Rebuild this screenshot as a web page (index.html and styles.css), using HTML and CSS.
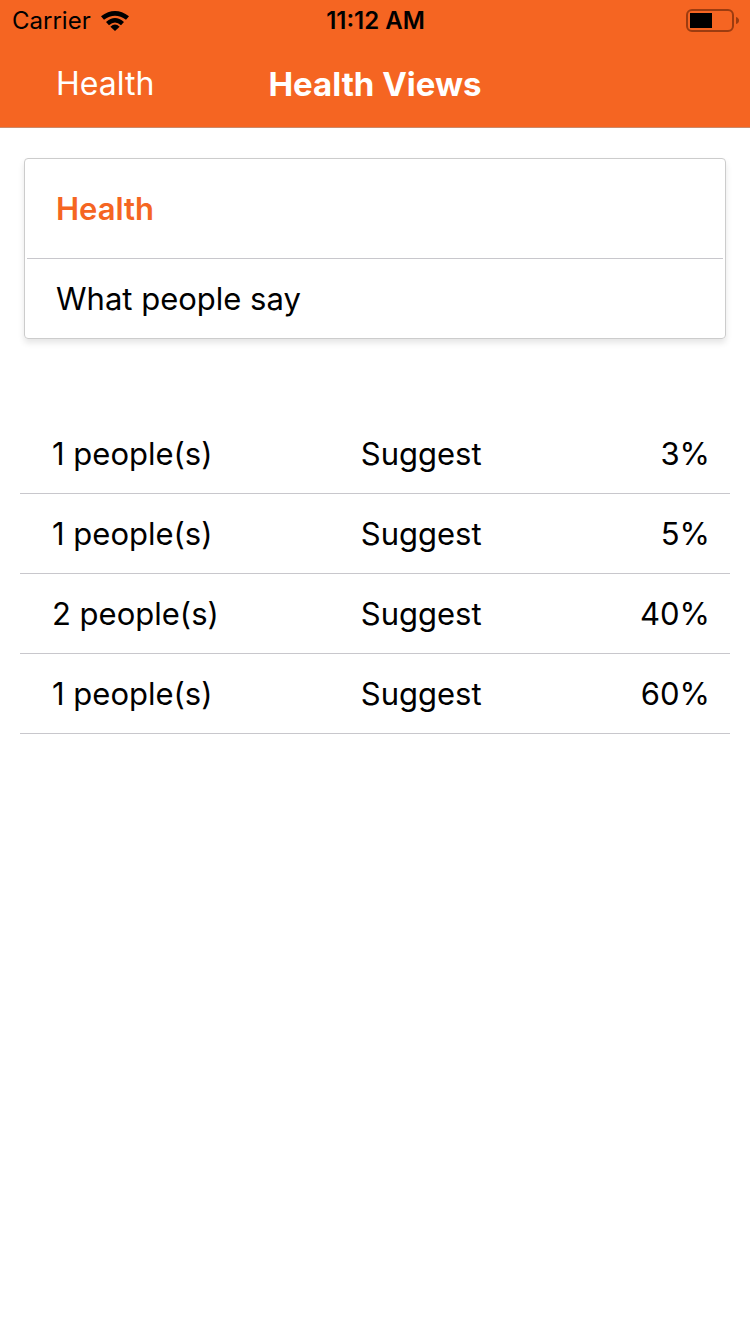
FILE: index.html
```html
<!DOCTYPE html>
<html lang="en">
<head>
  <meta charset="UTF-8" />
  <title>Health Views</title>
  <meta name="viewport" content="width=device-width, initial-scale=1.0" />
  <link rel="stylesheet" href="styles.css">
</head>
<body>
  <header class="header">
    <div class="status-bar">
      <div class="carrier">
        <span>Carrier</span>
        <svg width="28" height="20" viewBox="0 0 28 20" aria-hidden="true">
          <path d="M0 5.200Q14 -5.200 28 5.200L25 8.800Q14 0.600 3 8.800Z" />
          <path d="M5 11Q14 3.200 23 11L20 14.200Q14 9 8 14.200Z" />
          <path d="M9.400 15.800Q14 11.400 18.600 15.800L14 20Z" />
        </svg>
      </div>
      <div class="time">11:12 AM</div>
      <svg class="battery" width="53" height="24" viewBox="0 0 53 24" aria-hidden="true">
        <rect x="1" y="1" width="46" height="21" rx="5" fill="none" stroke="#9c3c10" stroke-width="2" />
        <rect x="4" y="4" width="22" height="15" />
        <path d="M50 8Q53 9 53 11.500Q53 14 50 15Z" fill="#9c3c10" />
      </svg>
    </div>
    <nav class="nav-bar">
      <button class="back" type="button">Health</button>
      <h1>Health Views</h1>
    </nav>
  </header>

  <main>
    <section class="card">
      <h2>Health</h2>
      <p>What people say</p>
    </section>

    <table class="views">
      <tr><td>1 people(s)</td><td>Suggest</td><td>3%</td></tr>
      <tr><td>1 people(s)</td><td>Suggest</td><td>5%</td></tr>
      <tr><td>2 people(s)</td><td>Suggest</td><td>40%</td></tr>
      <tr><td>1 people(s)</td><td>Suggest</td><td>60%</td></tr>
    </table>
  </main>
</body>
</html>
```
FILE: styles.css
```css
* { box-sizing: border-box; }
body {
  margin: 0;
  font-family: Inter, "Liberation Sans", sans-serif;
  font-size: 31px;
  line-height: 40px;
  color: #000;
  background: #fff;
}
h1, h2, p { margin: 0; }
.header {
  background: #f56522;
  border-bottom: 1px solid #c98a6c;
}
.status-bar {
  display: grid;
  grid-template-columns: 1fr auto 1fr;
  align-items: center;
  height: 41px;
  padding: 0 11px 0 12px;
  font-size: 24px;
}
.carrier {
  display: flex;
  align-items: center;
  gap: 10px;
}
.time { font-weight: 600; }
.battery { justify-self: end; }
.nav-bar {
  display: grid;
  grid-template-columns: 1fr auto 1fr;
  align-items: center;
  height: 86px;
  padding: 0 56px;
  color: #fff;
}
.back {
  justify-self: start;
  padding: 0;
  border: none;
  background: none;
  color: #fff;
  font: inherit;
  font-size: 32px;
  cursor: pointer;
}
.nav-bar h1 {
  font-size: 33px;
  font-weight: 700;
}
.card {
  margin: 30px 24px 0;
  padding: 0 2px;
  border: 1px solid #ccc;
  border-radius: 4px;
  box-shadow: 0 4px 6px rgba(0, 0, 0, 0.1);
}
.card h2 {
  padding: 30px 29px 29px;
  border-bottom: 1px solid #c8c7cc;
  color: #f56522;
  font-size: 31px;
  font-weight: 600;
}
.card p { padding: 20px 29px 19px; }
.views {
  width: calc(100% - 40px);
  margin: 75px 20px 0;
  border-spacing: 0;
  table-layout: fixed;
}
.views td {
  height: 80px;
  padding: 0;
  border-bottom: 1px solid #c8c7cc;
}
.views td:first-child {
  width: 48%;
  padding-left: 32px;
}
.views td:last-child {
  padding-right: 20px;
  text-align: right;
}
```
